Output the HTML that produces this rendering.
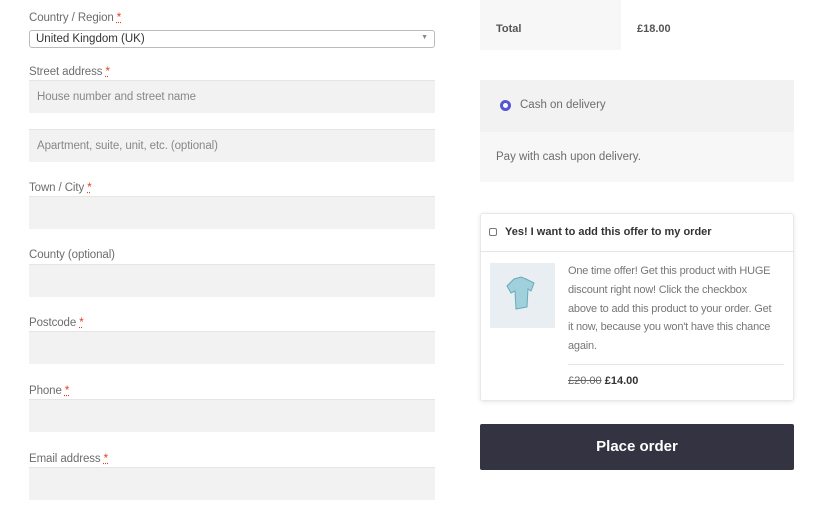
<!DOCTYPE html>
<html><head><style>
*{margin:0;padding:0;box-sizing:border-box}
body{width:820px;height:530px;background:#fff;font-family:"Liberation Sans",sans-serif;color:#6d6d6d;position:relative;overflow:hidden;font-size:12px}
.a{position:absolute}
.lbl{left:29px;font-size:11.5px;color:#6d6d6d;letter-spacing:-0.1px}
.lbl u{color:#e2401c;text-decoration:underline dotted}
.in{left:29px;width:406px;height:33px;background:#f2f2f2;border-top:1px solid #e5e5e5;padding:10px 8px;font-size:11.5px;color:#888;letter-spacing:-0.1px}
</style></head><body>
<div class="a lbl" style="top:12px">Country / Region <u>*</u></div>
<div class="a" style="left:29px;top:30px;width:406px;height:18px;border:1px solid #bbb;border-radius:3px;font-size:11.5px;color:#333;padding:2px 6px">United Kingdom (UK)<span style="position:absolute;right:6px;top:3px;font-size:7px;color:#888">▼</span></div>
<div class="a lbl" style="top:66px">Street address <u>*</u></div>
<div class="a in" style="top:80px">House number and street name</div>
<div class="a in" style="top:129px">Apartment, suite, unit, etc. (optional)</div>
<div class="a lbl" style="top:182px">Town / City <u>*</u></div>
<div class="a in" style="top:196px"></div>
<div class="a lbl" style="top:249px">County (optional)</div>
<div class="a in" style="top:264px"></div>
<div class="a lbl" style="top:317px">Postcode <u>*</u></div>
<div class="a in" style="top:331px"></div>
<div class="a lbl" style="top:385px">Phone <u>*</u></div>
<div class="a in" style="top:399px"></div>
<div class="a lbl" style="top:453px">Email address <u>*</u></div>
<div class="a in" style="top:467px"></div>

<div class="a" style="left:480px;top:0;width:141px;height:50px;background:#f7f7f7"></div>
<div class="a" style="left:496px;top:23px;font-weight:bold;font-size:11px;color:#555">Total</div>
<div class="a" style="left:637px;top:23px;font-weight:bold;font-size:11px;color:#555">£18.00</div>

<div class="a" style="left:480px;top:80px;width:314px;height:52px;background:#f2f2f2"></div>
<div class="a" style="left:480px;top:132px;width:314px;height:50px;background:#f7f7f7"></div>
<div class="a" style="left:500px;top:100px;width:11px;height:11px;border-radius:50%;border:3.5px solid #5456d6;background:#fff"></div>
<div class="a" style="left:520px;top:99px;font-size:11.5px">Cash on delivery</div>
<div class="a" style="left:496px;top:151px;font-size:11.5px">Pay with cash upon delivery.</div>

<div class="a" style="left:480px;top:213px;width:314px;height:188px;border:1px solid #e8e8e8;border-radius:3px;box-shadow:0 1px 4px rgba(0,0,0,.1)"></div>
<div class="a" style="left:480px;top:251px;width:314px;height:1px;background:#e5e5e5"></div>
<div class="a" style="left:489px;top:228px;width:8px;height:8px;border:1px solid #777;border-radius:2px"></div>
<div class="a" style="left:505px;top:226px;font-weight:bold;font-size:11px;color:#333">Yes! I want to add this offer to my order</div>
<div class="a" style="left:490px;top:263px;width:65px;height:65px;background:#e8eef2">
<svg width="65" height="65" viewBox="0 0 65 65"><path d="M24 16 L31 14 L36 16 L44 20 L41 28 L38 26 L37 44 L26 46 L25 28 L21 30 L17 23 Z" fill="#9fd0dc" stroke="#6aa9b9" stroke-width="1"/></svg></div>
<div class="a" style="left:568px;top:262px;white-space:nowrap;font-size:11px;letter-spacing:-0.2px;line-height:18.8px;color:#777">One time offer! Get this product with HUGE<br>discount right now! Click the checkbox<br>above to add this product to your order. Get<br>it now, because you won't have this chance<br>again.</div>
<div class="a" style="left:568px;top:364px;width:216px;height:1px;background:#e5e5e5"></div>
<div class="a" style="left:568px;top:375px;font-size:11px"><s style="color:#666">£20.00</s> <b style="color:#333">£14.00</b></div>

<div class="a" style="left:480px;top:424px;width:314px;height:46px;background:#333342;border-radius:2px;color:#fff;font-weight:bold;font-size:15px;text-align:center;line-height:46px">Place order</div>
</body></html>
